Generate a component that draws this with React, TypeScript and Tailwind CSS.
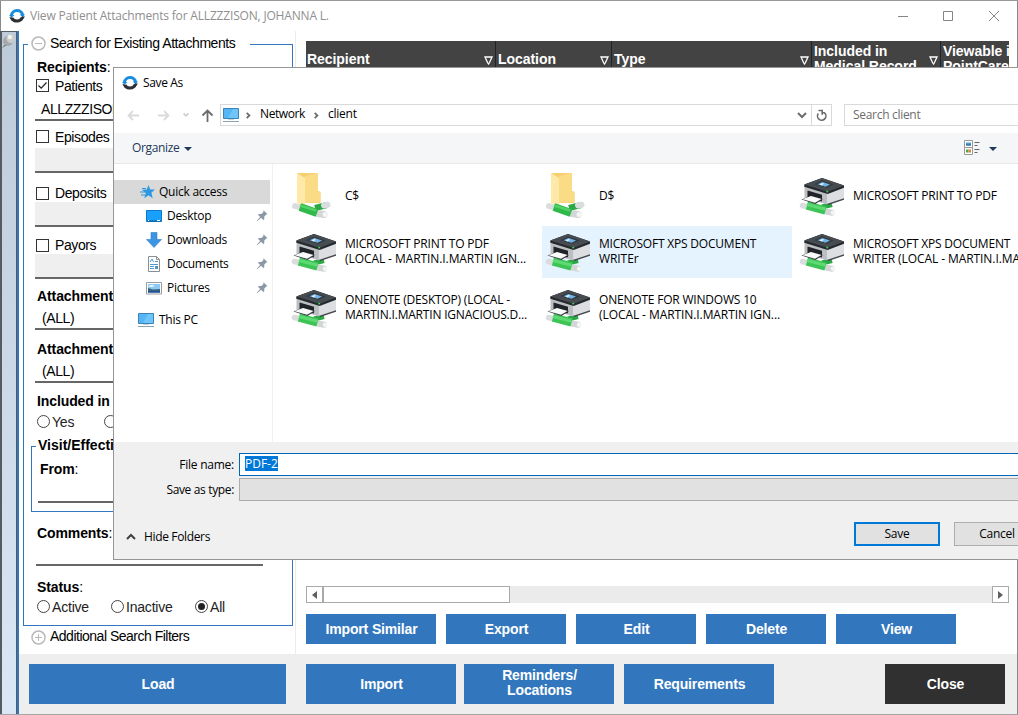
import type { ReactNode } from 'react';

function Logo() {
  return (
    <svg width="16" height="16" viewBox="0 0 16 16" fill="none" className="shrink-0">
      <path d="M2.300 7.500A5.800 5.800 0 0 1 13.700 7" stroke="#1a8cdc" strokeWidth="3" />
      <path d="M0 7h5.500L2.600 9.800zM10.800 6.500H16L13.500 9.500z" fill="#1a8cdc" />
      <path d="M13.300 9.500A5.800 5.800 0 0 1 2.800 10" stroke="#2d3035" strokeWidth="3" />
      <path d="M.3 9.300h2L5.500 12 3 13zM16 8.500l-3 4-2.500-1.500L13.500 8.500z" fill="#2d3035" />
    </svg>
  );
}

function Folder() {
  return (
    <svg width="48" height="48" viewBox="0 0 48 48" fill="none" className="shrink-0">
      <path d="M7 1h21v18l2.500 1v11H13z" fill="#f6d06f" />
      <path d="M15 4l12-3h1v18l2.500 1v10L15 31z" fill="#fadb86" />
      <path d="M7 1l8 5v26.500l-3.500.5L7 31z" fill="#ffe9a9" />
      <path d="M25 36L37 33" stroke="#2aa844" strokeWidth="6" />
      <path d="M34 33.500L37.500 32.800" stroke="#d9dddd" strokeWidth="6" strokeLinecap="round" />
      <path d="M5 34L10 35.500" stroke="#d9dddd" strokeWidth="6" strokeLinecap="round" />
      <path d="M28 41.500L34 42.500" stroke="#d2d6d7" strokeWidth="7" strokeLinecap="round" />
      <circle cx="35" cy="42.500" r="2.500" fill="#f5f6f6" />
      <path d="M10 35L27 41" stroke="#2fb94a" strokeWidth="8" />
      <path d="M10 33.500L26 38.500" stroke="#52d266" strokeWidth="2.500" />
    </svg>
  );
}

function Printer() {
  return (
    <svg width="48" height="48" viewBox="0 0 48 48" fill="none" className="shrink-0">
      <path d="M24 35L34 32.500" stroke="#2aa844" strokeWidth="5" />
      <path d="M4.500 33.500L10 35" stroke="#d9dddd" strokeWidth="5.500" strokeLinecap="round" />
      <path d="M28 39.500L34 40.800" stroke="#d2d6d7" strokeWidth="6" strokeLinecap="round" />
      <circle cx="35" cy="40.800" r="2.200" fill="#f5f6f6" />
      <path d="M9 33.500L27.500 38.500" stroke="#3cc455" strokeWidth="8.500" />
      <path d="M9 32.500L27.500 37.200" stroke="#5fd973" strokeWidth="3" />
      <path d="M6.500 13L29.500 20.500V32.500L6.500 26z" fill="#bcbec1" />
      <path d="M29.500 20.500L46 14.500V27L29.500 32.500z" fill="#dddee1" />
      <path d="M29.500 31.800L46 26.300V27.800L29.500 33.300z" fill="#44484d" />
      <path d="M6.300 12.500L24 6l22 7.500v2.200L29.700 22 6.300 14.800z" fill="#24292d" />
      <path d="M6.300 12.500L24 6l22 7.500-16.300 6.200z" fill="#464c52" />
      <path d="M16 12.200l8-3.700 12 4-7.500 3.500z" fill="#353b41" />
      <path d="M19.500 12.200l5-2.200 7.500 2.500-4.500 2.300z" fill="#72b4e8" />
      <path d="M21.500 12.200l3-1.200 1.500.7-2.500 1.700z" fill="#e4f4ff" />
      <path d="M28.300 18.800h1.800v1.600h-1.800z" fill="#3fd14f" />
      <path d="M9.500 18.500l14.500 4.300v6.400H9.500z" fill="#202428" />
      <path d="M3.500 27.500L13 23.800l12 3.200-7.500 5z" fill="#353a3e" />
      <path d="M4.500 27.200L13 24l10.500 2.900-6.500 3.900z" fill="#fafafa" />
    </svg>
  );
}

function Monitor() {
  return (
    <svg width="17" height="16" viewBox="0 0 17 16" fill="none" className="shrink-0">
      <path d="M.5 1.500h15v10H.5z" fill="#56b5f5" stroke="#3c83b5" />
      <path d="M10 2h5v9H5z" fill="#7fd0fc" opacity=".6" />
      <path d="M5 12.500h6" stroke="#c3d2dc" />
      <path d="M0 14.500h16" stroke="#8aa5b5" />
    </svg>
  );
}

function Star() {
  return (
    <svg width="15" height="14" viewBox="0 0 15 14" className="shrink-0">
      <path d="M8.500 0l1.700 4.500H15l-3.600 3.300 1.300 5.400-4.200-3-4.200 3 1.400-5.100L2 4.800l4.800-.3z" fill="#2e97e2" />
      <path d="M2 3.500h4M0 7h5M1 10h4" stroke="#2e97e2" />
    </svg>
  );
}

function DesktopIcon() {
  return (
    <svg width="16" height="12" viewBox="0 0 16 12" className="shrink-0">
      <path d="M.5.5h15v11H.5z" fill="#18a0fb" stroke="#0c78cc" />
      <path d="M1 11h14" stroke="#0a5ea5" />
      <path d="M2 10.500h1M11 10.500h3" stroke="#fff" />
    </svg>
  );
}

function DownloadIcon() {
  return (
    <svg width="16" height="16" viewBox="0 0 16 16" className="shrink-0">
      <path d="M5 .5h6v7h4.500L8 15.500.500 7.500H5z" fill="#3b95e3" stroke="#2b7fcb" strokeWidth=".6" />
    </svg>
  );
}

function DocumentIcon() {
  return (
    <svg width="16" height="16" viewBox="0 0 16 16" fill="none" className="shrink-0">
      <path d="M2.500.5h8l3 3v12h-11z" fill="#fff" stroke="#8b8f92" />
      <path d="M10.500.5v3h3" stroke="#8b8f92" />
      <path d="M4 6l2-3 1.500 3M9 5.500h3M4 8.500h8M4 10.500h4M4 12.500h4" stroke="#4d9ad3" />
      <path d="M9 10h3v3H9z" fill="#5a94bd" />
    </svg>
  );
}

function PictureIcon() {
  return (
    <svg width="16" height="13" viewBox="0 0 16 13" className="shrink-0">
      <path d="M.5.5h15v11.500H.5z" fill="#fff" stroke="#9a9da0" />
      <path d="M2 2h12v8.500H2z" fill="#8ec9f3" />
      <path d="M2 6l5 1.500 7-.5v3.500H2z" fill="#35657b" />
      <path d="M2 9h12v1.500H2z" fill="#244f9b" />
      <path d="M2 4l4-1 3 1-4 1z" fill="#fff" />
    </svg>
  );
}

function Pin() {
  return (
    <svg width="11" height="11" viewBox="0 0 11 11" className="-mt-px shrink-0">
      <path d="M6.500.3l4 4-1.200.3-2 2v2.700l-1 .8-2.200-2.300L.5 11 0 10.500l3.200-3.600L1 4.800 1.800 4h2.600l2-2z" fill="#8b98a5" />
    </svg>
  );
}

function Chevron({ d, color = '#6d6d6d', size = 10 }: { d: string; color?: string; size?: number }) {
  return (
    <svg width={size} height={size} viewBox="0 0 10 10" fill="none" className="shrink-0">
      <path d={d} stroke={color} strokeWidth="2" />
    </svg>
  );
}

function Arrow({ d, color }: { d: string; color: string }) {
  return (
    <svg width="13" height="13" viewBox="0 0 13 13" fill="none" className="shrink-0">
      <path d={d} stroke={color} strokeWidth="1.800" />
    </svg>
  );
}

function Expander({ plus = false }: { plus?: boolean }) {
  return (
    <svg width="15" height="15" viewBox="0 0 15 15" fill="none" stroke="#b9b9b9" className="shrink-0">
      <circle cx="7.500" cy="7.500" r="6.500" strokeWidth="1.500" />
      <path d={plus ? 'M4 7.500h7M7.500 4v7' : 'M4 7.500h7'} />
    </svg>
  );
}

function Check({ label, checked = false, className }: { label: string; checked?: boolean; className: string }) {
  return (
    <div className={'flex items-center pl-3 ' + className}>
      <span className="-mt-px flex size-[13px] items-center justify-center border border-[#333]">
        {checked && (
          <svg width="11" height="11" viewBox="0 0 11 11" fill="none">
            <path d="M1.500 5.500l2.700 2.700L9.500 2.500" stroke="#222" strokeWidth="1.200" />
          </svg>
        )}
      </span>
      <span className="-mt-px ml-1.5">{label}</span>
    </div>
  );
}

function Radio({ label, checked = false, className }: { label: string; checked?: boolean; className: string }) {
  return (
    <span className={'flex shrink-0 items-center gap-[2px] tracking-[-0.2px] text-[#222] ' + className}>
      <span className="-mt-px flex size-[13px] items-center justify-center rounded-full border border-[#444]">
        {checked && <span className="size-[7px] rounded-full bg-[#222]" />}
      </span>
      <span className="-mt-px">{label}</span>
    </span>
  );
}

function Title({ children, className }: { children: ReactNode; className: string }) {
  return <div className={'pl-[13px] font-bold leading-[18px] tracking-[-0.1px] whitespace-nowrap ' + className}>{children}</div>;
}

function Field({ children, grey = false }: { children?: ReactNode; grey?: boolean }) {
  return (
    <div className={'ml-[11px] h-[25px] w-[228px] border-b-2 border-[#666] pt-[5px] pl-[7px] ' + (grey ? 'bg-[#efefef]' : '')}>
      {children}
    </div>
  );
}

function SearchPanel() {
  return (
    <section className="h-[623px] w-[277px] shrink-0 border-r border-[#ececec] pt-[13px] pl-1">
      <div className="h-[582px] w-[270px] border-x border-b border-[#3277be]">
        <div className="flex h-3.5 items-start">
          <div className="h-px w-1 bg-[#3277be]" />
          <div className="-mt-2 ml-[3px] flex w-[219px] items-center gap-[4px] leading-4 tracking-[-0.42px] whitespace-nowrap">
            <Expander />
            <span className="-mt-0.5">Search for Existing Attachments</span>
          </div>
          <div className="h-px grow bg-[#3277be]" />
        </div>
        <Title className="h-[18px]">Recipients<span className="font-normal">:</span></Title>
        <Check label="Patients" checked className="h-5" />
        <div className="ml-[11px] h-[25px] w-[228px] border-b-2 border-[#666] pt-[5px] pl-[6px]">ALLZZZISON, JOHANNA</div>
        <Check label="Episodes" className="h-[27px] pt-[5px]" />
        <Field grey />
        <Check label="Deposits" className="h-[29px] pt-[12px]" />
        <Field grey />
        <Check label="Payors" className="h-[27px] pt-[10px]" />
        <Field grey />
        <Title className="h-[26px] pt-2">Attachment Type:</Title>
        <Field>(ALL)</Field>
        <Title className="h-[28px] pt-[10px]">Attachment Location:</Title>
        <Field>(ALL)</Field>
        <Title className="h-[27px] pt-[9px]">Included in Medical Record:</Title>
        <div className="flex h-6 items-center pl-[13px]">
          <Radio label="Yes" className="w-[67px]" />
          <Radio label="No" className="" />
        </div>
        <div className="mt-3 ml-[7px] h-[66px] w-[250px] border-x border-b border-[#3277be]">
          <div className="flex h-3.5 items-start">
            <div className="h-px w-1 bg-[#3277be]" />
            <div className="-mt-2.5 ml-0.5 font-bold leading-[18px] tracking-[0px]">Visit/Effective Date</div>
            <div className="h-px grow bg-[#3277be]" />
          </div>
          <div className="pl-2 leading-[18px] font-bold tracking-[-0.1px]">From<span className="font-normal">:</span></div>
          <div className="ml-1.5 h-[25px] w-[220px] border-b-2 border-[#666]" />
        </div>
        <Title className="mt-3 h-[18px]">Comments<span className="font-normal">:</span></Title>
        <div className="ml-3 h-6 w-[227px] border-b-2 border-[#666]" />
        <Title className="mt-3 h-[18px]">Status<span className="font-normal">:</span></Title>
        <div className="flex h-[22px] items-center pl-[13px]">
          <Radio label="Active" className="w-[74px]" />
          <Radio label="Inactive" className="w-[84px]" />
          <Radio label="All" checked className="" />
        </div>
      </div>
      <div className="flex h-[22px] items-center gap-[4px] pl-2 tracking-[-0.5px]">
        <Expander plus />
        <span className="-mt-0.5">Additional Search Filters</span>
      </div>
    </section>
  );
}

function Column({ children, className, filter = true }: { children: ReactNode; className: string; filter?: boolean }) {
  return (
    <div className={'flex shrink-0 items-center justify-between overflow-hidden pr-0.5 pl-[2px] text-[14px] leading-[15px] font-bold tracking-[-0.05px] whitespace-nowrap text-white ' + className}>
      <span>{children}</span>
      {filter && (
        <svg width="9" height="9" viewBox="0 0 9 9" fill="none" className="mt-0.5 shrink-0">
          <path d="M1 1h7L5.500 6.500 4.500 8 3.500 6.500z" stroke="#fff" strokeWidth="1.300" />
        </svg>
      )}
    </div>
  );
}

function Button({ children, className }: { children: ReactNode; className: string }) {
  return (
    <button className={'flex shrink-0 items-center justify-center text-center text-[14px] leading-[15px] font-bold tracking-[-0.15px] text-white ' + className}>
      <span className="ml-px">{children}</span>
    </button>
  );
}

function ScrollEnd({ d }: { d: string }) {
  return (
    <div className="flex size-[17px] items-center justify-center border border-[#a9a9a9] bg-white">
      <svg width="5" height="8" viewBox="0 0 5 8">
        <path d={d} fill="#606060" />
      </svg>
    </div>
  );
}

function ResultsPanel() {
  return (
    <section className="flex grow flex-col pt-2.5 pl-2.5">
      <div className="flex h-9 w-[703px] overflow-hidden bg-[#434343]">
        <Column className="w-[190px] border-r border-[#222] pl-px">Recipient</Column>
        <Column className="w-[116px] border-r border-[#222]">Location</Column>
        <Column className="w-[200px] border-r border-[#222]">Type</Column>
        <Column className="w-[129px] border-r border-[#222]">Included in<br />Medical Record</Column>
        <Column className="w-[90px]" filter={false}>Viewable in<br />PointCare</Column>
      </div>
      <div className="mt-[509px] flex h-[17px] w-[703px] bg-[#ebebeb]">
        <ScrollEnd d="M5 0v8L0 4z" />
        <div className="w-[187px] border border-[#a9a9a9] bg-white" />
        <div className="grow" />
        <ScrollEnd d="M0 0v8l5-4z" />
      </div>
      <div className="mt-[11px] flex gap-2.5">
        <Button className="h-[30px] w-[130px] bg-[#3277be]">Import Similar</Button>
        <Button className="h-[30px] w-[120px] bg-[#3277be]">Export</Button>
        <Button className="h-[30px] w-[120px] bg-[#3277be]">Edit</Button>
        <Button className="h-[30px] w-[120px] bg-[#3277be]">Delete</Button>
        <Button className="h-[30px] w-[120px] bg-[#3277be]">View</Button>
      </div>
    </section>
  );
}

function Place({ icon, label, pinned = false }: { icon: ReactNode; label: string; pinned?: boolean }) {
  return (
    <div className="flex h-6 items-center pr-0.5 pl-8">
      {icon}
      <span className="ml-[5px] grow tracking-[-0.3px]">{label}</span>
      {pinned && <Pin />}
    </div>
  );
}

const tiles = [
  { lines: ['C$'], folder: true },
  { lines: ['D$'], folder: true },
  { lines: ['MICROSOFT PRINT TO PDF'] },
  { lines: ['MICROSOFT PRINT TO PDF', '(LOCAL - MARTIN.I.MARTIN IGN...'] },
  { lines: ['MICROSOFT XPS DOCUMENT', 'WRITEr'], active: true },
  { lines: ['MICROSOFT XPS DOCUMENT', 'WRITER (LOCAL - MARTIN.I.MARTIN'] },
  { lines: ['ONENOTE (DESKTOP) (LOCAL -', 'MARTIN.I.MARTIN IGNACIOUS.D...'], tight: true },
  { lines: ['ONENOTE FOR WINDOWS 10', '(LOCAL - MARTIN.I.MARTIN IGN...'] },
];

function SaveDialog() {
  return (
    <div className="absolute top-[67px] left-[113px] flex h-[493px] w-[905px] flex-col overflow-hidden border-y border-l border-[#969696] bg-white font-['Open_Sans',sans-serif] text-[12px] tracking-[-0.25px] whitespace-nowrap text-black">
      <div className="flex h-[30px] shrink-0 items-center gap-[5px] pl-2">
        <Logo />
        <span className="tracking-[-0.35px]">Save As</span>
      </div>
      <div className="flex h-[35px] shrink-0 pt-1.5">
        <div className="flex h-[22px] w-[106px] shrink-0 items-center pl-[13px]">
          <Arrow d="M12 6.500H1.500M6 2L1.500 6.500 6 11" color="#dadada" />
          <span className="w-[17px] shrink-0" />
          <Arrow d="M1 6.500h10.500M7 2l4.500 4.500L7 11" color="#dadada" />
          <span className="w-3 shrink-0" />
          <Chevron d="M2 3l3 3 3-3" color="#cccccc" size={8} />
          <span className="w-[11px] shrink-0" />
          <Arrow d="M6.500 13V1.500M1.500 6.500l5-5 5 5" color="#6b6b6b" />
        </div>
        <div className="flex h-[22px] w-[612px] shrink-0 items-center border border-[#d9d9d9] pl-0.5">
          <Monitor />
          <span className="w-1" />
          <Chevron d="M3 2l3 3-3 3" size={9} />
          <span className="-mt-0.5 ml-[7px] w-[46px] tracking-[-0.4px]">Network</span>
          <span className="w-1.5" />
          <Chevron d="M3 2l3 3-3 3" size={9} />
          <span className="-mt-0.5 ml-[7px] grow tracking-[-0.25px]">client</span>
          <Chevron d="M1 3l4 4 4-4" size={10} />
          <div className="ml-[4px] flex h-full w-5 items-center justify-center border-l border-[#d9d9d9]">
            <svg width="12" height="13" viewBox="0 0 12 13" fill="none" stroke="#6b6b6b" strokeWidth="1.600">
              <path d="M2.300 4.500A4.200 4.200 0 1 0 8.500 3.800H6" />
              <path d="M2.500 1.500H6.200v4.300" />
            </svg>
          </div>
        </div>
        <div className="ml-3 flex h-[22px] w-[190px] shrink-0 items-center border border-[#d9d9d9] pl-2 tracking-[-0.3px] text-[#6d6d6d]">Search client</div>
      </div>
      <div className="flex h-[31px] shrink-0 items-center border-b border-[#e8e8e9] bg-[#f5f6f7] pl-[18px] text-[#1e395b]">
        <span className="w-[48px] tracking-[-0.35px]">Organize</span>
        <svg width="8" height="4" viewBox="0 0 8 4" className="mt-px ml-1"><path d="M0 0h8L4 4z" fill="#1e395b" /></svg>
        <svg width="16" height="16" viewBox="0 0 16 16" fill="none" className="ml-[772px]">
          <path d="M.5.5h8v7h-8zM.5 7.500h8v7h-8z" fill="#fff" stroke="#999" />
          <path d="M2 2.500h5v3H2z" fill="#4c9bd4" />
          <path d="M2 4.500h5v1H2z" fill="#285f89" />
          <path d="M2 9.500h2.500v3H2z" fill="#4aaa48" />
          <path d="M4.500 9.500H7v3H4.500z" fill="#df803b" />
          <path d="M10.500 2.500h5M10.500 5.500h3M10.500 9.500h5M10.500 12.500h3" stroke="#666" />
        </svg>
        <svg width="8" height="4" viewBox="0 0 8 4" className="mt-px ml-[9px]"><path d="M0 0h8L4 4z" fill="#1e395b" /></svg>
      </div>
      <div className="flex h-[278px] shrink-0">
        <nav className="w-[159px] shrink-0 border-r border-[#f0f0f0] pt-4 pr-0.5">
          <div className="flex h-6 items-center gap-1 bg-[#d9d9d9] pl-[26px]">
            <Star />
            Quick access
          </div>
          <Place icon={<DesktopIcon />} label="Desktop" pinned />
          <Place icon={<DownloadIcon />} label="Downloads" pinned />
          <Place icon={<DocumentIcon />} label="Documents" pinned />
          <Place icon={<PictureIcon />} label="Pictures" pinned />
          <div className="mt-2 flex h-6 items-center gap-1 pl-6">
            <Monitor />
            This PC
          </div>
        </nav>
        <div className="grid shrink-0 grid-cols-[250px_250px_250px] content-start gap-1 pt-1.5 pl-[15px]">
          {tiles.map((tile, i) => (
            <div key={i} className={'flex h-[52px] items-center gap-[7px] pl-0.5 ' + (tile.active ? 'bg-[#e5f3ff]' : '')}>
              {tile.folder ? <Folder /> : <Printer />}
              <div className="-mt-0.5 leading-[15px]">
                {tile.lines.map((line, n) => (
                  <div key={line} className={n === 1 && !tile.tight ? 'tracking-[-0.08px]' : 'tracking-[-0.2px]'}>{line}</div>
                ))}
              </div>
            </div>
          ))}
        </div>
      </div>
      <div className="grow bg-[#f0f0f0] pt-[11px]">
        <div className="flex h-[23px] items-center">
          <span className="w-[120px] text-right">File name:</span>
          <div className="ml-[5px] flex h-[23px] grow items-center border border-r-0 border-[#0067b8] bg-white pl-[5px]">
            <span className="-mt-0.5 h-[15px] bg-[#0078d7] leading-[15px] tracking-[0px] text-white">PDF-2</span>
          </div>
        </div>
        <div className="mt-0.5 flex h-[23px] items-center">
          <span className="w-[120px] text-right tracking-[-0.35px]">Save as type:</span>
          <div className="ml-[5px] h-[23px] grow border border-r-0 border-[#adadad] bg-[#e1e1e1]" />
        </div>
        <div className="mt-[21px] flex h-6 items-center">
          <div className="mt-1.5 flex w-[740px] shrink-0 items-center gap-[8px] pl-3 tracking-[-0.35px]">
            <Chevron d="M1 7l4-4 4 4" color="#404040" />
            Hide Folders
          </div>
          <button className="h-6 w-[86px] shrink-0 border-2 border-[#0078d7] bg-[#e1e1e1]">Save</button>
          <button className="ml-3.5 h-6 w-[86px] shrink-0 border border-[#adadad] bg-[#e1e1e1]">Cancel</button>
        </div>
      </div>
    </div>
  );
}

export default function App() {
  return (
    <main className="relative flex h-[715px] w-[1018px] flex-col overflow-hidden bg-white font-['Liberation_Sans',Arial,sans-serif] text-[14px] leading-4 tracking-[-0.4px] text-black">
      <div className="h-px shrink-0 bg-[#999]" />
      <header className="flex h-[30px] shrink-0 items-center border-r border-l border-[#888] pl-2 text-[#8f8f8f]">
        <Logo />
        <span className="ml-[5px] grow font-['Open_Sans',sans-serif] text-[12px] tracking-[-0.18px]">View Patient Attachments for ALLZZZISON, JOHANNA L.</span>
        <svg width="102" height="12" viewBox="0 0 102 12" fill="none" stroke="#858585" className="mr-[17px]">
          <path d="M0 6.500h10M45.500 1.500h9v9h-9zM91 1l10 10M101 1L91 11" />
        </svg>
      </header>
      <div className="flex h-[683px] shrink-0 border-r border-[#888]">
        <aside className="w-[19px] shrink-0 border-r-2 border-[#3277be]">
          <div className="h-full border-t border-r border-l-2 border-[#555b62] bg-gradient-to-b from-[#bdcad8] to-[#dbe7f4]">
            <svg width="14" height="17" viewBox="0 0 14 17">
              <path d="M0 16l5-6 2 2z" fill="#6f7377" />
              <circle cx="6" cy="9" r="5" fill="#a5a9ac" />
              <circle cx="9" cy="6.500" r="4.500" fill="#c9cccd" />
              <circle cx="8" cy="5" r="2.200" fill="#f0f2f2" />
            </svg>
          </div>
        </aside>
        <div className="flex grow flex-col">
          <div className="flex h-[623px] shrink-0">
            <SearchPanel />
            <ResultsPanel />
          </div>
          <footer className="flex h-[60px] items-center bg-[#eeeeee] pl-2.5">
            <Button className="h-10 w-[257px] bg-[#3277be]">Load</Button>
            <Button className="ml-5 h-10 w-[150px] bg-[#3277be]">Import</Button>
            <Button className="ml-2 h-10 w-[150px] bg-[#3277be] pb-0.5">Reminders/<br />Locations</Button>
            <Button className="ml-2.5 h-10 w-[150px] bg-[#3277be]">Requirements</Button>
            <Button className="ml-[111px] h-10 w-[120px] bg-[#303030]">Close</Button>
          </footer>
        </div>
      </div>
      <div className="h-px shrink-0 bg-[#a5a5a5]" />
      <SaveDialog />
    </main>
  );
}
